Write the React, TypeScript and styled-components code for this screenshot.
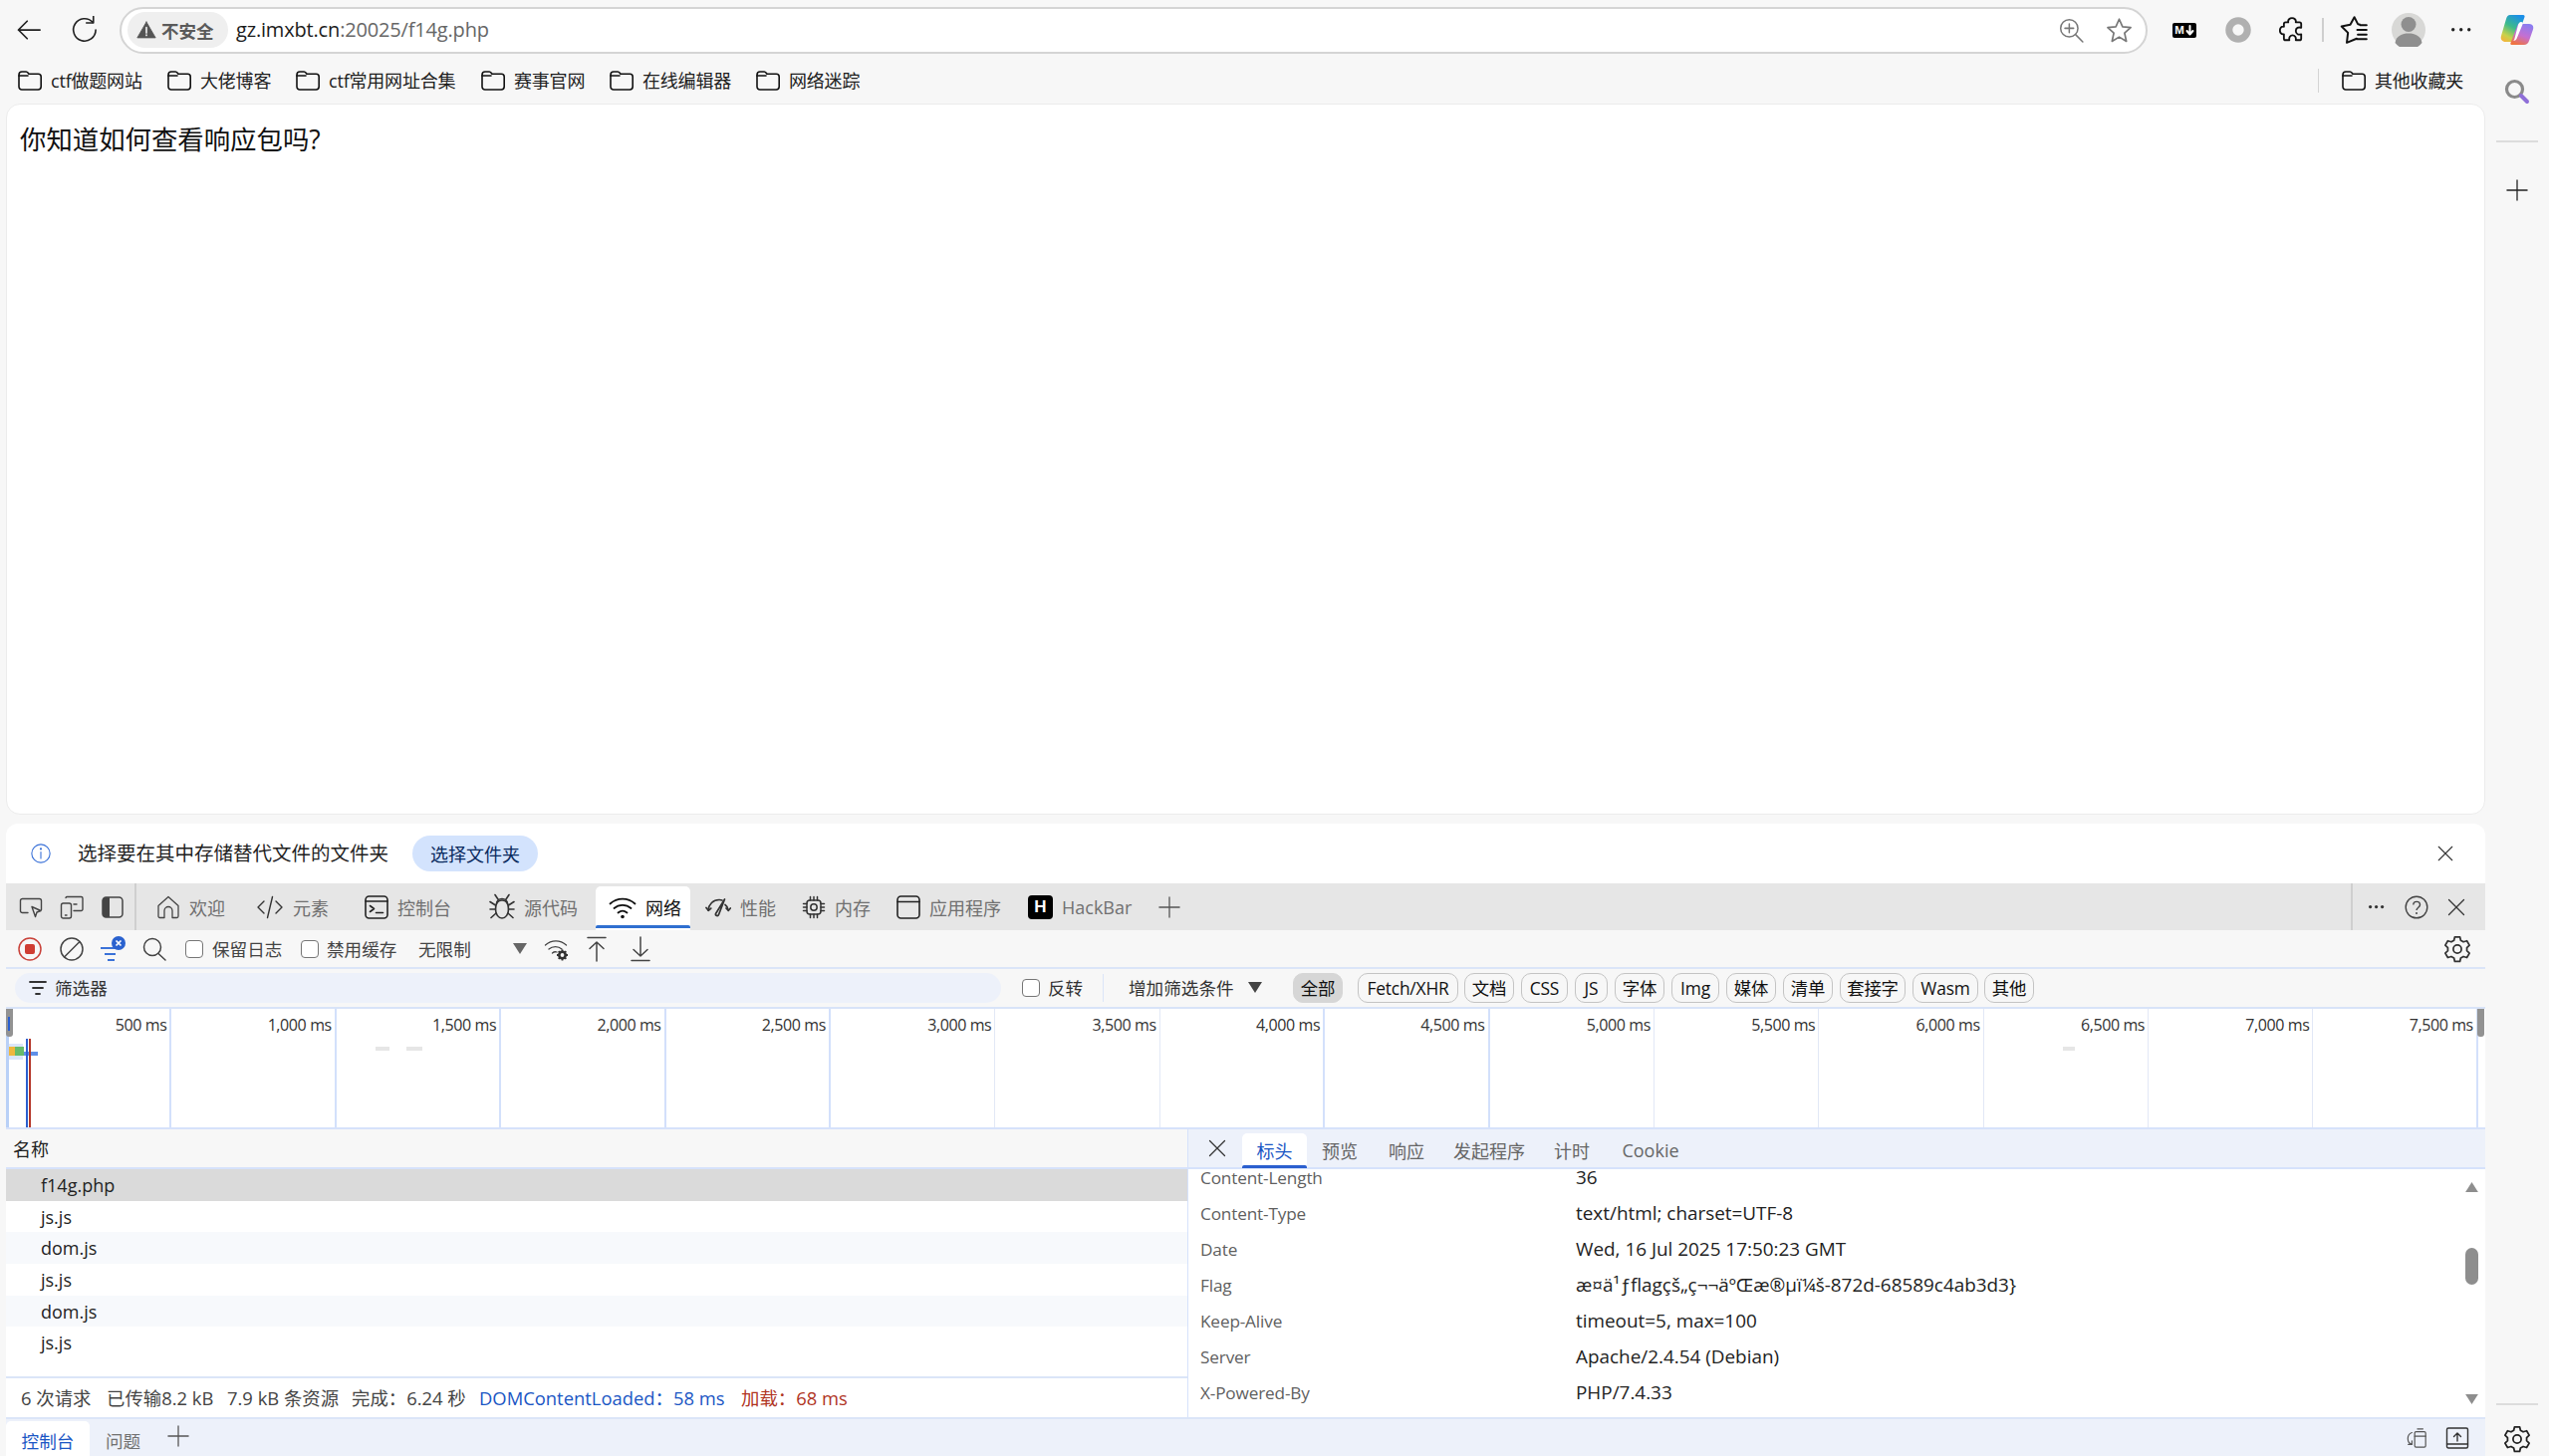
import React from 'react';
import styled, { createGlobalStyle } from 'styled-components';

const FONT = `"Open Sans", "Noto Sans CJK SC", sans-serif`;

const GlobalStyle = createGlobalStyle`
  html, body {
    margin: 0;
    padding: 0;
    background: #f7f7f7;
    overflow: hidden;
  }
  * {
    box-sizing: border-box;
  }
  svg {
    display: block;
    flex: none;
  }
  body {
    font-family: ${FONT};
    font-size: 18px;
    color: #202020;
  }
`;

const Shell = styled.div`
  display: flex;
  width: 2559px;
  height: 1462px;
  background: #f7f7f7;
  overflow: hidden;
`;

const Main = styled.div`
  display: flex;
  flex-direction: column;
  width: 2495px;
  flex: none;
`;

const TopBar = styled.div`
  display: flex;
  align-items: center;
  height: 60px;
  flex: none;
`;

const Slot = styled.div<{ $w?: number; $ml?: number; $mt?: number; $mb?: number }>`
  display: flex;
  align-items: center;
  justify-content: center;
  flex: none;
  width: ${(p) => p.$w ?? 32}px;
  margin-left: ${(p) => p.$ml ?? 0}px;
  margin-top: ${(p) => p.$mt ?? 0}px;
  margin-bottom: ${(p) => p.$mb ?? 0}px;
`;

const AddressBar = styled.div`
  display: flex;
  align-items: center;
  width: 2036px;
  height: 47px;
  margin-left: 19px;
  flex: none;
  padding: 0 13px 0 6px;
  background: #fff;
  border: 2px solid #d4d4d4;
  border-radius: 24px;
`;

const SecurityBadge = styled.div`
  display: flex;
  align-items: center;
  gap: 5px;
  width: 101px;
  height: 36px;
  padding-left: 9px;
  flex: none;
  background: #efefef;
  border-radius: 18px;
  font-size: 17.5px;
  font-weight: 700;
  color: #5a5a5a;
`;

const Url = styled.div`
  margin-left: 8px;
  font-size: 20px;
  line-height: 28px;
  letter-spacing: -0.17px;
  color: #666;
  flex: 1;

  b {
    font-weight: 400;
    color: #1c1c1c;
  }
`;

const ToolDivider = styled.div`
  width: 2px;
  height: 24px;
  margin-left: 12px;
  background: #cfcfcf;
  flex: none;
`;

const MdBadge = styled.div`
  display: flex;
  align-items: center;
  justify-content: center;
  gap: 1px;
  width: 24px;
  height: 15px;
  background: #000;
  border-radius: 2px;
  color: #fff;
  font-family: "Liberation Sans", sans-serif;
  font-size: 11.5px;
  font-weight: 700;
  line-height: 15px;
`;

const BookmarkBar = styled.div`
  display: flex;
  align-items: center;
  height: 44px;
  flex: none;
  padding: 0 0 2px 18px;
`;

const Bookmark = styled.div<{ $w?: number }>`
  display: flex;
  align-items: center;
  gap: 9px;
  flex: none;
  width: ${(p) => (p.$w ? `${p.$w}px` : 'auto')};
  font-size: 18px;
  line-height: 24px;
  letter-spacing: -0.2px;
  white-space: nowrap;
`;

const Spacer = styled.div`
  flex: 1;
`;

const BookmarkDivider = styled.div`
  width: 1px;
  height: 24px;
  margin-right: 23px;
  background: #d4d4d4;
  flex: none;
`;

const PageCard = styled.div`
  height: 714px;
  margin-left: 6px;
  padding: 20px 13px;
  background: #fff;
  border: 1px solid #ececec;
  border-radius: 14px;
  flex: none;
  font-size: 26.4px;
  line-height: 30px;
  color: #111;
`;

const DevTools = styled.div`
  display: flex;
  flex-direction: column;
  flex: none;
  height: 635px;
  margin: 9px 0 0 6px;
  background: #fff;
  border-radius: 12px 12px 0 0;
  overflow: hidden;
`;

const InfoBar = styled.div`
  display: flex;
  align-items: center;
  height: 60px;
  flex: none;
  padding-left: 21px;
  font-size: 19.5px;
  color: #1f1f1f;
`;

const InfoText = styled.div`
  margin-left: 23px;
  width: 336px;
  flex: none;
  line-height: 26px;
  white-space: nowrap;
`;

const PickButton = styled.div`
  display: flex;
  align-items: center;
  justify-content: center;
  width: 126px;
  height: 36px;
  flex: none;
  background: #d3e3fd;
  border-radius: 18px;
  font-size: 18px;
  color: #0a2a5e;
`;

const InfoClose = styled.div`
  margin-left: auto;
  margin-right: 31px;
  display: flex;
`;

const TabStrip = styled.div`
  display: flex;
  align-items: stretch;
  height: 47px;
  flex: none;
  background: #e6e6e6;
  padding-left: 10px;
`;

const StripIcons = styled.div`
  display: flex;
  align-items: center;
  flex: none;
  width: 121px;
  border-right: 2px solid #cfcfcf;
`;

const Tab = styled.div<{ $w: number; $ml: number; $active?: boolean }>`
  position: relative;
  display: flex;
  align-items: center;
  gap: 9px;
  flex: none;
  width: ${(p) => p.$w}px;
  margin-left: ${(p) => p.$ml}px;
  margin-top: 3px;
  padding-left: ${(p) => (p.$active ? 13 : 10)}px;
  padding-bottom: 3px;
  font-size: 18px;
  color: ${(p) => (p.$active ? '#111' : '#707070')};
  background: ${(p) => (p.$active ? '#fff' : 'transparent')};
  border-radius: 5px 5px 0 0;
  white-space: nowrap;
`;

const TabUnderline = styled.div`
  position: absolute;
  left: 0;
  right: 0;
  bottom: 2px;
  height: 3px;
  background: #2f6fd0;
  border-radius: 2px 2px 0 0;
`;

const HackIcon = styled.div`
  display: flex;
  align-items: center;
  justify-content: center;
  width: 25px;
  height: 24px;
  flex: none;
  background: #000;
  border-radius: 4px;
  color: #fff;
  font-family: "Liberation Sans", sans-serif;
  font-size: 17px;
  font-weight: 700;
`;

const StripEnd = styled.div`
  display: flex;
  align-items: center;
  margin-left: auto;
  width: 135px;
  padding-left: 9px;
  flex: none;
  border-left: 2px solid #cfcfcf;
`;

const NetToolbar = styled.div`
  display: flex;
  align-items: center;
  height: 39px;
  flex: none;
  background: #f7f7f7;
  border-bottom: 2px solid #dbe5f8;
  padding-right: 13px;
  font-size: 17.6px;
  color: #444;
`;

const CheckBox = styled.div<{ $ml: number }>`
  width: 18px;
  height: 18px;
  margin-left: ${(p) => p.$ml}px;
  flex: none;
  background: #fff;
  border: 1.5px solid #767676;
  border-radius: 4px;
`;

const ToolLabel = styled.div<{ $w: number; $ml: number }>`
  width: ${(p) => p.$w}px;
  margin-left: ${(p) => p.$ml}px;
  flex: none;
  line-height: 24px;
  white-space: nowrap;
`;

const FilterBar = styled.div`
  display: flex;
  align-items: center;
  height: 40px;
  flex: none;
  padding-left: 9px;
  padding-bottom: 1px;
  background: #f7f7f7;
  border-bottom: 2px solid #d8e3f8;
  font-size: 17.6px;
  color: #333;
`;

const FilterInput = styled.div`
  display: flex;
  align-items: center;
  gap: 8px;
  width: 990px;
  height: 30px;
  flex: none;
  padding-left: 14px;
  background: #edf1fa;
  border-radius: 15px;
`;

const VDivider = styled.div<{ $ml: number }>`
  width: 1px;
  height: 28px;
  margin-left: ${(p) => p.$ml}px;
  background: #dbe5f8;
  flex: none;
`;

const Chip = styled.div<{ $w: number; $ml: number; $active?: boolean }>`
  display: flex;
  align-items: center;
  justify-content: center;
  width: ${(p) => p.$w}px;
  height: 30px;
  margin-left: ${(p) => p.$ml}px;
  flex: none;
  font-size: 17.4px;
  letter-spacing: -0.2px;
  color: #111;
  white-space: nowrap;
  border-radius: 10px;
  border: 1px solid ${(p) => (p.$active ? '#d6d6d6' : '#c4c4c4')};
  background: ${(p) => (p.$active ? '#d6d6d6' : 'transparent')};
`;

const Overview = styled.div`
  position: relative;
  display: flex;
  height: 121px;
  flex: none;
  padding-left: 1px;
  background: #fff;
  border-bottom: 2px solid #d6e2fb;
`;

const GridCell = styled.div<{ $strong?: boolean }>`
  flex: 0 0 165.4px;
  padding: 5px 3px 0 0;
  text-align: right;
  font-size: 16px;
  line-height: 22px;
  letter-spacing: -0.4px;
  color: #333;
  border-right: ${(p) => (p.$strong ? '2px solid #d3e0fb' : '1px solid #e2e8f6')};
`;

const Handle = styled.div<{ $side: 'left' | 'right' }>`
  position: absolute;
  top: 0;
  ${(p) => (p.$side === 'left' ? 'left: 0;' : 'right: 1px;')}
  width: 7px;
  height: 28px;
  background: #929292;
  border-radius: 0 0 3px 3px;
`;

const Mark = styled.div<{ $x: number; $y: number; $w: number; $h: number; $c: string }>`
  position: absolute;
  left: ${(p) => p.$x}px;
  top: ${(p) => p.$y}px;
  width: ${(p) => p.$w}px;
  height: ${(p) => p.$h}px;
  background: ${(p) => p.$c};
`;

const Split = styled.div`
  display: flex;
  flex: 1;
  min-height: 0;
`;

const NameColumn = styled.div`
  display: flex;
  flex-direction: column;
  width: 1186px;
  flex: none;
  background: #fff;
`;

const NameHeader = styled.div`
  display: flex;
  align-items: center;
  height: 40px;
  flex: none;
  padding-left: 7px;
  background: #f7f7f7;
  border-bottom: 2px solid #d6e2fb;
  font-size: 18px;
  color: #222;
`;

const NameRow = styled.div<{ $selected?: boolean; $alt?: boolean }>`
  display: flex;
  align-items: center;
  height: 31.7px;
  flex: none;
  padding-left: 35px;
  font-size: 18px;
  color: #222;
  background: ${(p) => (p.$selected ? '#dadada' : p.$alt ? '#f7f9fc' : '#fff')};
`;

const StatusBar = styled.div`
  display: flex;
  align-items: center;
  height: 41px;
  flex: none;
  margin-top: auto;
  padding: 0 0 2px 15px;
  background: #fff;
  border-top: 2px solid #dbe5f8;
  font-size: 18.4px;
  color: #444;
`;

const StatusItem = styled.div<{ $w: number; $c?: string }>`
  width: ${(p) => p.$w}px;
  flex: none;
  color: ${(p) => p.$c ?? '#444'};
  white-space: nowrap;
`;

const DetailColumn = styled.div`
  display: flex;
  flex-direction: column;
  flex: 1;
  min-width: 0;
  border-left: 1px solid #d6e2fb;
  background: #fff;
`;

const DetailTabs = styled.div`
  display: flex;
  align-items: stretch;
  height: 40px;
  flex: none;
  padding-top: 4px;
  background: #edf1fa;
  border-bottom: 2px solid #d6e2fb;
`;

const DetailClose = styled.div`
  display: flex;
  align-items: center;
  justify-content: center;
  width: 54px;
  padding: 0 0 4px 4px;
  flex: none;
`;

const DetailTab = styled.div<{ $w: number; $active?: boolean }>`
  position: relative;
  display: flex;
  align-items: center;
  justify-content: center;
  width: ${(p) => p.$w}px;
  flex: none;
  font-size: 18px;
  color: ${(p) => (p.$active ? '#1a56c4' : '#666')};
  background: ${(p) => (p.$active ? '#fff' : 'transparent')};
  border-radius: 5px 5px 0 0;
`;

const DetailUnderline = styled.div`
  position: absolute;
  left: 0;
  right: 0;
  bottom: -1px;
  height: 3px;
  background: #2a5fcf;
  border-radius: 2px 2px 0 0;
`;

const DetailBody = styled.div`
  display: flex;
  flex: 1;
  min-height: 0;
  overflow: hidden;
`;

const HeaderList = styled.div`
  flex: 1;
  margin-top: -10px;
  padding-left: 12px;
`;

const HeaderRow = styled.div`
  display: flex;
  align-items: center;
  height: 36px;
  white-space: nowrap;
`;

const HeaderName = styled.div`
  width: 377px;
  flex: none;
  font-size: 17.2px;
  letter-spacing: -0.15px;
  color: #5f5f5f;
`;

const HeaderValue = styled.div`
  font-size: 18.9px;
  color: #222;
`;

const ScrollTrack = styled.div`
  display: flex;
  flex-direction: column;
  align-items: center;
  width: 24px;
  padding: 13px 4px 13px 0;
  flex: none;
`;

const ScrollThumb = styled.div`
  width: 13px;
  height: 37px;
  margin-top: 56px;
  background: #8e8e8e;
  border-radius: 7px;
`;

const Drawer = styled.div`
  display: flex;
  align-items: flex-end;
  height: 39px;
  flex: none;
  background: #edf1fa;
  border-top: 2px solid #dbe5f8;
  font-size: 17.6px;
`;

const DrawerTab = styled.div<{ $active?: boolean }>`
  display: flex;
  align-items: center;
  justify-content: center;
  width: ${(p) => (p.$active ? 84 : 67)}px;
  height: 35px;
  padding-top: 3px;
  flex: none;
  color: ${(p) => (p.$active ? '#1a56c4' : '#707070')};
  background: ${(p) => (p.$active ? '#fff' : 'transparent')};
  border-radius: 5px 5px 0 0;
`;

const DrawerEnd = styled.div`
  display: flex;
  align-items: center;
  margin-left: auto;
  height: 37px;
  padding-right: 13px;
`;

const Sidebar = styled.div`
  display: flex;
  flex-direction: column;
  align-items: center;
  width: 64px;
  flex: none;
  padding: 14px 0 3px;
`;

const SideRule = styled.div<{ $mt: number }>`
  width: 42px;
  height: 2px;
  margin-top: ${(p) => p.$mt}px;
  background: #dcdcdc;
  flex: none;
`;

const Svg: React.FC<{ size?: number; w?: number; h?: number; vb?: string; c?: string; sw?: number; children: React.ReactNode }> = ({
  size = 24,
  w,
  h,
  vb = '0 0 24 24',
  c = '#222',
  sw = 1.5,
  children,
}) => (
  <svg
    width={w ?? size}
    height={h ?? size}
    viewBox={vb}
    fill="none"
    stroke={c}
    strokeWidth={sw}
    strokeLinecap="round"
    strokeLinejoin="round"
  >
    {children}
  </svg>
);

const Folder = () => (
  <Svg w={24} h={20} vb="0 0 24 20" c="#111" sw={1.6}>
    <path d="M1 4.200C1 2.400 2.200 1 4 1h4.200c.8 0 1.400.4 2 1.200l.8 1.100H20.400c1.600 0 2.800 1.200 2.800 2.800v10c0 1.700-1.200 2.900-2.900 2.900H3.900C2.200 19 1 17.800 1 16.100V4.200z" />
    <path d="M1 5h9" />
  </Svg>
);

const ArrowBack = () => (
  <Svg size={28} c="#222" sw={1.5}>
    <path d="M21.500 12H3M10.500 4.500L3 12l7.500 7.500" />
  </Svg>
);

const Reload = () => (
  <Svg size={28} c="#222" sw={1.4}>
    <path d="M19 5.500A9.600 9.600 0 1 0 21.500 12" />
    <path d="M13.500 6h6V0.500" />
  </Svg>
);

const WarnIcon = () => (
  <Svg w={20} h={20} c="#555" sw={1}>
    <path d="M12 2.500L23 21.500H1L12 2.500z" fill="#555" />
    <path d="M12 9v6.500M12 18v.5" stroke="#efefef" strokeWidth={2} />
  </Svg>
);

const ZoomIcon = () => (
  <Svg size={26} c="#777" sw={1.4}>
    <circle cx="10.500" cy="10.500" r="8" />
    <path d="M16.500 16.500L23 23M10.500 6.500v8M6.500 10.500h8" />
  </Svg>
);

const StarIcon = () => (
  <Svg size={27} c="#777" sw={1.5}>
    <path d="M12 2l3 6.800 7.300.7-5.500 4.900 1.600 7.300L12 17.900l-6.400 3.800 1.600-7.300L1.700 9.500 9 8.800 12 2z" />
  </Svg>
);

const RingIcon = () => (
  <Svg size={26} c="#b0b0b0" sw={6.5}>
    <circle cx="12" cy="12" r="8.500" />
  </Svg>
);

const PuzzleIcon = () => (
  <Svg size={26} c="#111" sw={1.7}>
    <path d="M8.500 5C8 2.500 10 1 12 1s4 1.500 3.500 4H19a1.500 1.500 0 0 1 1.500 1.500V10c-2.500-.8-5 0-5 3s2.500 3.800 5 3v4a1.500 1.500 0 0 1-1.500 1.500h-3.500c.5-2.500-1-4.500-3-4.500s-3.500 2-3 4.500H6A1.500 1.500 0 0 1 4.500 20v-4C2 16.500.8 14.500.8 12.500S2 8.500 4.500 9V6.500A1.500 1.500 0 0 1 6 5h2.500z" />
  </Svg>
);

const FavIcon = () => (
  <Svg size={28} c="#111" sw={1.7}>
    <path d="M14.500 19.500L6 23l1-8.500L1.500 9l7.500-1.500L12.500 1l3 6 1.500.2" />
    <path d="M15 12h8M15.500 16h7.500M14.500 20h8.500M17.500 8h5.500" />
  </Svg>
);

const Avatar = () => (
  <svg width="34" height="34" viewBox="0 0 34 34">
    <circle cx="17" cy="17" r="17" fill="#d8d8d6" />
    <circle cx="17" cy="11.500" r="7.500" fill="#8f8f8f" />
    <path d="M3.500 30c1-7 7-9.500 13.500-9.500S29.500 23 30.500 30a17 17 0 0 1-27 0z" fill="#8f8f8f" />
  </svg>
);

const Dots: React.FC<{ r?: number; gap?: number; c?: string }> = ({ r = 1.7, gap = 8, c = '#222' }) => (
  <svg width={gap * 2 + r * 2 + 2} height={r * 2 + 2}>
    {[0, 1, 2].map((i) => (
      <circle key={i} cx={r + 1 + i * gap} cy={r + 1} r={r} fill={c} />
    ))}
  </svg>
);

const Copilot = () => (
  <svg width="34" height="32" viewBox="0 0 34 32">
    <defs>
      <linearGradient id="copA" x1="0.700" y1="0" x2="0.200" y2="1">
        <stop offset="0" stopColor="#1b8fe8" />
        <stop offset="0.450" stopColor="#3dbb8b" />
        <stop offset="0.800" stopColor="#c8d24a" />
        <stop offset="1" stopColor="#f1b53c" />
      </linearGradient>
      <linearGradient id="copB" x1="0.700" y1="0" x2="0.300" y2="1">
        <stop offset="0" stopColor="#8a7df0" />
        <stop offset="0.550" stopColor="#c56fd0" />
        <stop offset="1" stopColor="#f0743e" />
      </linearGradient>
    </defs>
    <path d="M10 1h13c1.500 0 1.800 1 1.500 2L17 24c-.8 2.500-2.300 4-5 4H5.500C2 28 0 25.500 1 22L6 5c.7-2.500 2-4 4-4z" fill="url(#copA)" />
    <path d="M19 10h10c3 0 5 2 4 5.500L29 27c-.8 2.800-2.800 4-5 4H12c-1.500 0-2-1-1.500-2l7-18c.2-.6.800-1 1.500-1z" fill="url(#copB)" />
    <path d="M21 8c1.500 0 2 1.200 1.500 2.500L16.500 25c-.5 1.300-2 2-3.500 2 1-.5 1.200-1.500 1.500-2.500L18 11c.3-1.500 1.500-3 3-3z" fill="#fff" />
  </svg>
);

const SideSearch = () => (
  <svg width="26" height="26" viewBox="0 0 26 26">
    <circle cx="10.500" cy="10.500" r="8" fill="none" stroke="#8a8a8a" strokeWidth="3.200" />
    <path d="M17 17l6 6" stroke="#8f6fd8" strokeWidth="4" strokeLinecap="round" />
  </svg>
);

const PlusIcon: React.FC<{ size?: number; c?: string }> = ({ size = 22, c = '#222' }) => (
  <Svg size={size} c={c} sw={1.4}>
    <path d="M12 1v22M1 12h22" />
  </Svg>
);

const CloseIcon: React.FC<{ size?: number; c?: string }> = ({ size = 20, c = '#333' }) => (
  <Svg size={size} c={c} sw={1.5}>
    <path d="M3 3l18 18M21 3L3 21" />
  </Svg>
);

const InfoIcon = () => (
  <Svg size={22} c="#3b72d8" sw={1.2}>
    <circle cx="12" cy="12" r="10" />
    <path d="M12 10.500v7" />
    <circle cx="12" cy="7" r=".6" fill="#3b72d8" />
  </Svg>
);

const InspectIcon = () => (
  <Svg c="#444" sw={1.4}>
    <path d="M9 17.500H3.500A2 2 0 0 1 1.500 15.500V5.500a2 2 0 0 1 2-2h17a2 2 0 0 1 2 2v9" />
    <path d="M13 11.500l9 4-4 1.500-1.500 4.500-3.500-10z" />
  </Svg>
);

const DeviceIcon = () => (
  <Svg c="#444" sw={1.4}>
    <rect x="1.500" y="8" width="10" height="15" rx="2" />
    <path d="M6 2.500a1.500 1.500 0 0 1 1.500-1h14a1.500 1.500 0 0 1 1.500 1.500V14a1.500 1.500 0 0 1-1.500 1.500H14M5.500 20h1.500M14 9h3" />
  </Svg>
);

const DockIcon = () => (
  <svg width="22" height="22" viewBox="0 0 22 22">
    <rect x="1" y="1" width="20" height="20" rx="3.500" fill="none" stroke="#444" strokeWidth="1.500" />
    <path d="M4.500 1H8v20H4.500A3.500 3.500 0 0 1 1 17.500v-13A3.500 3.500 0 0 1 4.500 1z" fill="#444" />
  </svg>
);

const HomeIcon = () => (
  <Svg c="#444" sw={1.3}>
    <path d="M2 10.500L12 1.500l10 9V21a1.500 1.500 0 0 1-1.500 1.500H16V15.500a4 4 0 0 0-8 0V22.500H3.500A1.500 1.500 0 0 1 2 21V10.500z" />
  </Svg>
);

const CodeIcon = () => (
  <Svg w={28} h={24} vb="0 0 28 24" c="#333" sw={1.4}>
    <path d="M8 6l-6 6 6 6M20 6l6 6-6 6M16.500 1.500L11.500 22.500" />
  </Svg>
);

const ConsoleIcon = () => (
  <Svg c="#222" sw={1.6}>
    <rect x="1" y="1" width="22" height="22" rx="3.500" />
    <path d="M1 6h22M5.500 10.500l4 3-4 3M11.500 17.500h7" />
  </Svg>
);

const BugIcon = () => (
  <Svg w={26} h={28} vb="0 0 26 28" c="#333" sw={1.6}>
    <path d="M13 7c4.500 0 6.500 4 6.500 9 0 5-2.800 9-6.500 9s-6.500-4-6.500-9c0-5 2-9 6.500-9z" />
    <path d="M7.500 10.500c0-3 2.500-5 5.500-5s5.500 2 5.500 5M9 6L6 1.500M17 6l3-4.500M6.500 12L1 8.500M19.500 12L25 8.500M6.500 16H1M19.500 16H25M7 20l-5 4.500M19 20l5 4.500" />
  </Svg>
);

const WifiIcon = () => (
  <Svg w={28} h={26} vb="0 0 28 26" c="#111" sw={1.8}>
    <path d="M1.500 9.500c7-6.500 18-6.500 25 0M5.500 14c4.800-4.300 12.200-4.300 17 0M9.500 18.500c2.700-2.200 6.300-2.200 9 0" />
    <circle cx="14" cy="22.500" r="1.800" fill="#111" stroke="none" />
  </Svg>
);

const GaugeIcon = () => (
  <Svg w={26} h={22} vb="0 0 26 22" c="#333" sw={1.7}>
    <path d="M3 14C3.500 8 8 3.500 14 3.500c1.200 0 2.200.2 3 .5M20 8.500c1.800 1.300 3 3.200 3.300 5.500" />
    <path d="M1 11.500l2.200 2.800 2.600-2.200M21 12l2.300 2.300 2-2.300" />
    <path d="M19.500 3L13.500 18.500c-.7 1.800-3.600 1-3-1L19.500 3z" />
  </Svg>
);

const ChipIcon = () => (
  <Svg c="#333" sw={1.5}>
    <rect x="5" y="5" width="14" height="14" rx="3" />
    <circle cx="12" cy="12" r="3.200" />
    <path d="M8.500 1.500V5M12 1.500V5M15.500 1.500V5M8.500 19v3.500M12 19v3.500M15.500 19v3.500M1.500 8.500H5M1.500 12H5M1.500 15.500H5M19 8.500h3.500M19 12h3.500M19 15.500h3.500" />
  </Svg>
);

const WindowIcon = () => (
  <Svg c="#222" sw={1.6}>
    <rect x="1" y="1" width="22" height="22" rx="3.500" />
    <path d="M1 6.500h22" />
  </Svg>
);

const RecordIcon = () => (
  <svg width="24" height="24" viewBox="0 0 24 24">
    <circle cx="12" cy="12" r="11" fill="none" stroke="#c9423a" strokeWidth="1.500" />
    <rect x="7" y="7" width="10" height="10" rx="2" fill="#cf3d33" />
  </svg>
);

const ClearIcon = () => (
  <Svg c="#444" sw={1.5}>
    <circle cx="12" cy="12" r="11" />
    <path d="M20 4.500L4.500 20" />
  </Svg>
);

const FilterActive = () => (
  <svg width="28" height="26" viewBox="0 0 28 26">
    <path d="M1 12h15M5 18h11M8 24h7" stroke="#3b72d8" strokeWidth="1.800" fill="none" />
    <circle cx="19" cy="7" r="7" fill="#2a62cf" />
    <path d="M16.500 4.500l5 5M21.500 4.500l-5 5" stroke="#fff" strokeWidth="1.700" />
  </svg>
);

const SearchIcon = () => (
  <Svg c="#444" sw={1.5}>
    <circle cx="10" cy="10" r="8.500" />
    <path d="M16 16.500L23 23" />
  </Svg>
);

const Triangle: React.FC<{ dir?: 'up' | 'down'; c?: string; w?: number; h?: number }> = ({ dir = 'down', c = '#666', w = 14, h = 11 }) => (
  <svg width={w} height={h} viewBox="0 0 14 11">
    <path d={dir === 'down' ? 'M0 0h14L7 11z' : 'M0 11h14L7 0z'} fill={c} />
  </svg>
);

const WifiGear = () => (
  <svg width="26" height="26" viewBox="0 0 26 26">
    <path d="M1.500 9c6-5.500 15-5.500 21 0M5 13c3.800-3.300 9.500-3.300 13 0M8.500 17c1.500-1.300 3-1.500 4.500-1" stroke="#444" strokeWidth="1.300" fill="none" strokeLinecap="round" />
    <circle cx="18.500" cy="19" r="3.200" fill="none" stroke="#333" strokeWidth="2.600" />
    <path d="M18.500 13.500v2M18.500 22.500v2M13 19h2M22 19h2M14.700 15.200l1.300 1.300M21 21.500l1.300 1.300M22.300 15.200L21 16.500M16 21.500l-1.300 1.300" stroke="#333" strokeWidth="1.800" />
  </svg>
);

const UploadIcon = () => (
  <Svg w={20} h={26} vb="0 0 20 26" c="#444" sw={1.5}>
    <path d="M1 1.500h18M10 25V6M3 12.500L10 6l7 6.500" />
  </Svg>
);

const DownloadIcon = () => (
  <Svg w={20} h={26} vb="0 0 20 26" c="#444" sw={1.5}>
    <path d="M1 24.500h18M10 1v19M3 13.500L10 20l7-6.500" />
  </Svg>
);

const GearIcon: React.FC<{ c?: string }> = ({ c = '#333' }) => (
  <Svg size={28} c={c} sw={1.5}>
    <path d="M9.800 1.500h4.400l.7 3 2.300 1.300 3-.9 2.200 3.800-2.200 2.100v2.600l2.200 2.100-2.200 3.800-3-.9-2.300 1.300-.7 3H9.800l-.7-3-2.300-1.300-3 .9-2.200-3.800 2.200-2.100v-2.600L1.600 8.700l2.200-3.800 3 .9 2.300-1.300.7-3z" />
    <circle cx="12" cy="12" r="3.500" />
  </Svg>
);

const HelpIcon = () => (
  <svg width="24" height="24" viewBox="0 0 24 24">
    <circle cx="12" cy="12" r="10.800" fill="none" stroke="#444" strokeWidth="1.400" />
    <path d="M8.800 9.500c0-4.200 6.700-4.200 6.700 0 0 2.700-3.500 2.700-3.500 5.500" fill="none" stroke="#444" strokeWidth="1.400" />
    <circle cx="12" cy="18" r="1" fill="#444" />
  </svg>
);

const FilterLines = () => (
  <Svg w={18} h={16} vb="0 0 18 16" c="#333" sw={1.8}>
    <path d="M1 2h16M4 8h10M7 14h4" />
  </Svg>
);

const MdArrow = () => (
  <Svg w={9} h={11} vb="0 0 9 11" c="#fff" sw={2}>
    <path d="M4.500 1v8M1.500 6l3 3.500 3-3.500" />
  </Svg>
);

const DockSwap = () => (
  <Svg size={22} c="#555" sw={1.3}>
    <rect x="10" y="5" width="12" height="17" rx="1.500" />
    <path d="M10 10h12M13 2h6M7 6c-3 1-4.500 3.500-4.500 6.500S4 18 7 19M7 15v4H3" />
  </Svg>
);

const DockUp = () => (
  <Svg size={24} c="#333" sw={1.4}>
    <rect x="1.500" y="2" width="21" height="20" rx="1.500" />
    <path d="M1.500 18h21M12 15V7M8.500 10.500L12 7l3.500 3.500" />
  </Svg>
);

const bookmarks = [
  { label: 'ctf做题网站', w: 150 },
  { label: '大佬博客', w: 129 },
  { label: 'ctf常用网址合集', w: 186 },
  { label: '赛事官网', w: 129 },
  { label: '在线编辑器', w: 147 },
  { label: '网络迷踪', w: 0 },
];

const tabs = [
  { label: '欢迎', icon: <HomeIcon />, w: 89, ml: 10 },
  { label: '元素', icon: <CodeIcon />, w: 89, ml: 11 },
  { label: '控制台', icon: <ConsoleIcon />, w: 108, ml: 20 },
  { label: '源代码', icon: <BugIcon />, w: 108, ml: 17 },
  { label: '网络', icon: <WifiIcon />, w: 95, ml: 9, active: true },
  { label: '性能', icon: <GaugeIcon />, w: 89, ml: 5 },
  { label: '内存', icon: <ChipIcon />, w: 89, ml: 8 },
  { label: '应用程序', icon: <WindowIcon />, w: 126, ml: 6 },
  { label: 'HackBar', icon: <HackIcon>H</HackIcon>, w: 125, ml: 6 },
];

const chips = [
  { label: '全部', w: 50, ml: 30, active: true },
  { label: 'Fetch/XHR', w: 101, ml: 15 },
  { label: '文档', w: 50, ml: 6 },
  { label: 'CSS', w: 47, ml: 7 },
  { label: 'JS', w: 33, ml: 7 },
  { label: '字体', w: 50, ml: 7 },
  { label: 'Img', w: 48, ml: 7 },
  { label: '媒体', w: 50, ml: 7 },
  { label: '清单', w: 50, ml: 7 },
  { label: '套接字', w: 66, ml: 7 },
  { label: 'Wasm', w: 66, ml: 7 },
  { label: '其他', w: 50, ml: 6 },
];

const gridLabels = ['500', '1,000', '1,500', '2,000', '2,500', '3,000', '3,500', '4,000', '4,500', '5,000', '5,500', '6,000', '6,500', '7,000', '7,500'];
const softLines = [5, 6, 9, 10, 11, 12, 13];

const files = ['f14g.php', 'js.js', 'dom.js', 'js.js', 'dom.js', 'js.js'];

const detailTabs = [
  { label: '标头', w: 65, active: true },
  { label: '预览', w: 66 },
  { label: '响应', w: 68 },
  { label: '发起程序', w: 98 },
  { label: '计时', w: 68 },
  { label: 'Cookie', w: 90 },
];

const headers = [
  ['Content-Length', '36'],
  ['Content-Type', 'text/html; charset=UTF-8'],
  ['Date', 'Wed, 16 Jul 2025 17:50:23 GMT'],
  ['Flag', 'æ¤ä¹ƒflagçš„ç¬¬äºŒæ®µï¼š-872d-68589c4ab3d3}'],
  ['Keep-Alive', 'timeout=5, max=100'],
  ['Server', 'Apache/2.4.54 (Debian)'],
  ['X-Powered-By', 'PHP/7.4.33'],
];

const App: React.FC = () => {
  return (
    <Shell>
      <GlobalStyle />
      <Main>
        <TopBar>
          <Slot $w={32} $ml={13}><ArrowBack /></Slot>
          <Slot $w={32} $ml={24}><Reload /></Slot>
          <AddressBar>
            <SecurityBadge>
              <WarnIcon />
              不安全
            </SecurityBadge>
            <Url><b>gz.imxbt.cn</b>:20025/f14g.php</Url>
            <Slot $w={28}><ZoomIcon /></Slot>
            <Slot $w={28} $ml={20}><StarIcon /></Slot>
          </AddressBar>
          <Slot $w={36} $ml={19}><MdBadge>M<MdArrow /></MdBadge></Slot>
          <Slot $w={36} $ml={18}><RingIcon /></Slot>
          <Slot $w={36} $ml={18}><PuzzleIcon /></Slot>
          <ToolDivider />
          <Slot $w={36} $ml={12}><FavIcon /></Slot>
          <Slot $w={36} $ml={19}><Avatar /></Slot>
          <Slot $w={36} $ml={17}><Dots /></Slot>
        </TopBar>

        <BookmarkBar>
          {bookmarks.map((b) => (
            <Bookmark key={b.label} $w={b.w || undefined}>
              <Folder />
              {b.label}
            </Bookmark>
          ))}
          <Spacer />
          <BookmarkDivider />
          <Bookmark $w={144}>
            <Folder />
            其他收藏夹
          </Bookmark>
        </BookmarkBar>

        <PageCard>你知道如何查看响应包吗?</PageCard>

        <DevTools>
          <InfoBar>
            <Slot $w={28}><InfoIcon /></Slot>
            <InfoText>选择要在其中存储替代文件的文件夹</InfoText>
            <PickButton>选择文件夹</PickButton>
            <InfoClose><CloseIcon size={18} /></InfoClose>
          </InfoBar>

          <TabStrip>
            <StripIcons>
              <Slot $w={30}><InspectIcon /></Slot>
              <Slot $w={30} $ml={11}><DeviceIcon /></Slot>
              <Slot $w={30} $ml={11}><DockIcon /></Slot>
            </StripIcons>
            {tabs.map((t) => (
              <Tab key={t.label} $w={t.w} $ml={t.ml} $active={t.active}>
                {t.icon}
                {t.label}
                {t.active && <TabUnderline />}
              </Tab>
            ))}
            <Slot $w={24} $ml={15}><PlusIcon size={22} c="#555" /></Slot>
            <StripEnd>
              <Slot $w={30}><Dots r={1.6} gap={6} c="#333" /></Slot>
              <Slot $w={30} $ml={10}><HelpIcon /></Slot>
              <Slot $w={30} $ml={10}><CloseIcon size={20} /></Slot>
            </StripEnd>
          </TabStrip>

          <NetToolbar>
            <Slot $w={30} $ml={9}><RecordIcon /></Slot>
            <Slot $w={30} $ml={12}><ClearIcon /></Slot>
            <Slot $w={30} $ml={12}><FilterActive /></Slot>
            <Slot $w={30} $ml={11}><SearchIcon /></Slot>
            <CheckBox $ml={16} />
            <ToolLabel $w={72} $ml={9}>保留日志</ToolLabel>
            <CheckBox $ml={17} />
            <ToolLabel $w={72} $ml={8}>禁用缓存</ToolLabel>
            <ToolLabel $w={56} $ml={20}>无限制</ToolLabel>
            <Slot $w={14} $ml={39}><Triangle /></Slot>
            <Slot $w={30} $ml={15}><WifiGear /></Slot>
            <Slot $w={30} $ml={10}><UploadIcon /></Slot>
            <Slot $w={30} $ml={14}><DownloadIcon /></Slot>
            <Slot $w={30} $ml={1794}><GearIcon /></Slot>
          </NetToolbar>

          <FilterBar>
            <FilterInput>
              <FilterLines />
              筛选器
            </FilterInput>
            <CheckBox $ml={21} />
            <ToolLabel $w={38} $ml={8}>反转</ToolLabel>
            <VDivider $ml={17} />
            <ToolLabel $w={112} $ml={25}>增加筛选条件</ToolLabel>
            <Slot $w={16} $ml={7}><Triangle c="#444" /></Slot>
            {chips.map((c) => (
              <Chip key={c.label} $w={c.w} $ml={c.ml} $active={c.active}>
                {c.label}
              </Chip>
            ))}
          </FilterBar>

          <Overview>
            {gridLabels.map((l, i) => (
              <GridCell key={l} $strong={!softLines.includes(i)}>
                {l} ms
              </GridCell>
            ))}
            <Mark $x={0} $y={0} $w={3} $h={119} $c="#b9d0f7" />
            <Mark $x={3} $y={35} $w={14} $h={16} $c="#dbe6fa" />
            <Mark $x={3} $y={38} $w={6} $h={9} $c="#efb73e" />
            <Mark $x={9} $y={38} $w={9} $h={9} $c="#66bb6a" />
            <Mark $x={18} $y={43} $w={14} $h={4} $c="#5f8fe8" />
            <Mark $x={20} $y={30} $w={2} $h={89} $c="#2a5fcf" />
            <Mark $x={23} $y={30} $w={2} $h={89} $c="#b5382a" />
            <Mark $x={371} $y={38} $w={14} $h={4} $c="#e6e6e6" />
            <Mark $x={402} $y={38} $w={16} $h={4} $c="#e6e6e6" />
            <Mark $x={2065} $y={38} $w={12} $h={4} $c="#e6e6e6" />
            <Handle $side="left" />
            <Mark $x={2} $y={8} $w={2} $h={14} $c="#2a5fcf" />
            <Handle $side="right" />
          </Overview>

          <Split>
            <NameColumn>
              <NameHeader>名称</NameHeader>
              {files.map((f, i) => (
                <NameRow key={i} $selected={i === 0} $alt={i === 2 || i === 4}>
                  {f}
                </NameRow>
              ))}
              <StatusBar>
                <StatusItem $w={86}>6 次请求</StatusItem>
                <StatusItem $w={121}>已传输8.2 kB</StatusItem>
                <StatusItem $w={125}>7.9 kB 条资源</StatusItem>
                <StatusItem $w={128}>完成：6.24 秒</StatusItem>
                <StatusItem $w={263} $c="#1a56c4">DOMContentLoaded：58 ms</StatusItem>
                <StatusItem $w={110} $c="#b0341f">加载：68 ms</StatusItem>
              </StatusBar>
            </NameColumn>

            <DetailColumn>
              <DetailTabs>
                <DetailClose><CloseIcon size={20} /></DetailClose>
                {detailTabs.map((t) => (
                  <DetailTab key={t.label} $w={t.w} $active={t.active}>
                    {t.label}
                    {t.active && <DetailUnderline />}
                  </DetailTab>
                ))}
              </DetailTabs>
              <DetailBody>
                <HeaderList>
                  {headers.map(([name, value]) => (
                    <HeaderRow key={name}>
                      <HeaderName>{name}</HeaderName>
                      <HeaderValue>{value}</HeaderValue>
                    </HeaderRow>
                  ))}
                </HeaderList>
                <ScrollTrack>
                  <Triangle dir="up" c="#8e8e8e" w={13} h={10} />
                  <ScrollThumb />
                  <Spacer />
                  <Triangle c="#8e8e8e" w={13} h={10} />
                </ScrollTrack>
              </DetailBody>
            </DetailColumn>
          </Split>

          <Drawer>
            <DrawerTab $active>控制台</DrawerTab>
            <DrawerTab>问题</DrawerTab>
            <Slot $w={24} $ml={10} $mb={9}><PlusIcon size={22} c="#555" /></Slot>
            <DrawerEnd>
              <Slot $w={30}><DockSwap /></Slot>
              <Slot $w={30} $ml={11}><DockUp /></Slot>
            </DrawerEnd>
          </Drawer>
        </DevTools>
      </Main>

      <Sidebar>
        <Copilot />
        <Slot $w={26} $mt={33}><SideSearch /></Slot>
        <SideRule $mt={36} />
        <Slot $w={26} $mt={37}><PlusIcon size={22} /></Slot>
        <Spacer />
        <SideRule $mt={0} />
        <Slot $w={30} $mt={20}><GearIcon c="#222" /></Slot>
      </Sidebar>
    </Shell>
  );
};

export default App;
